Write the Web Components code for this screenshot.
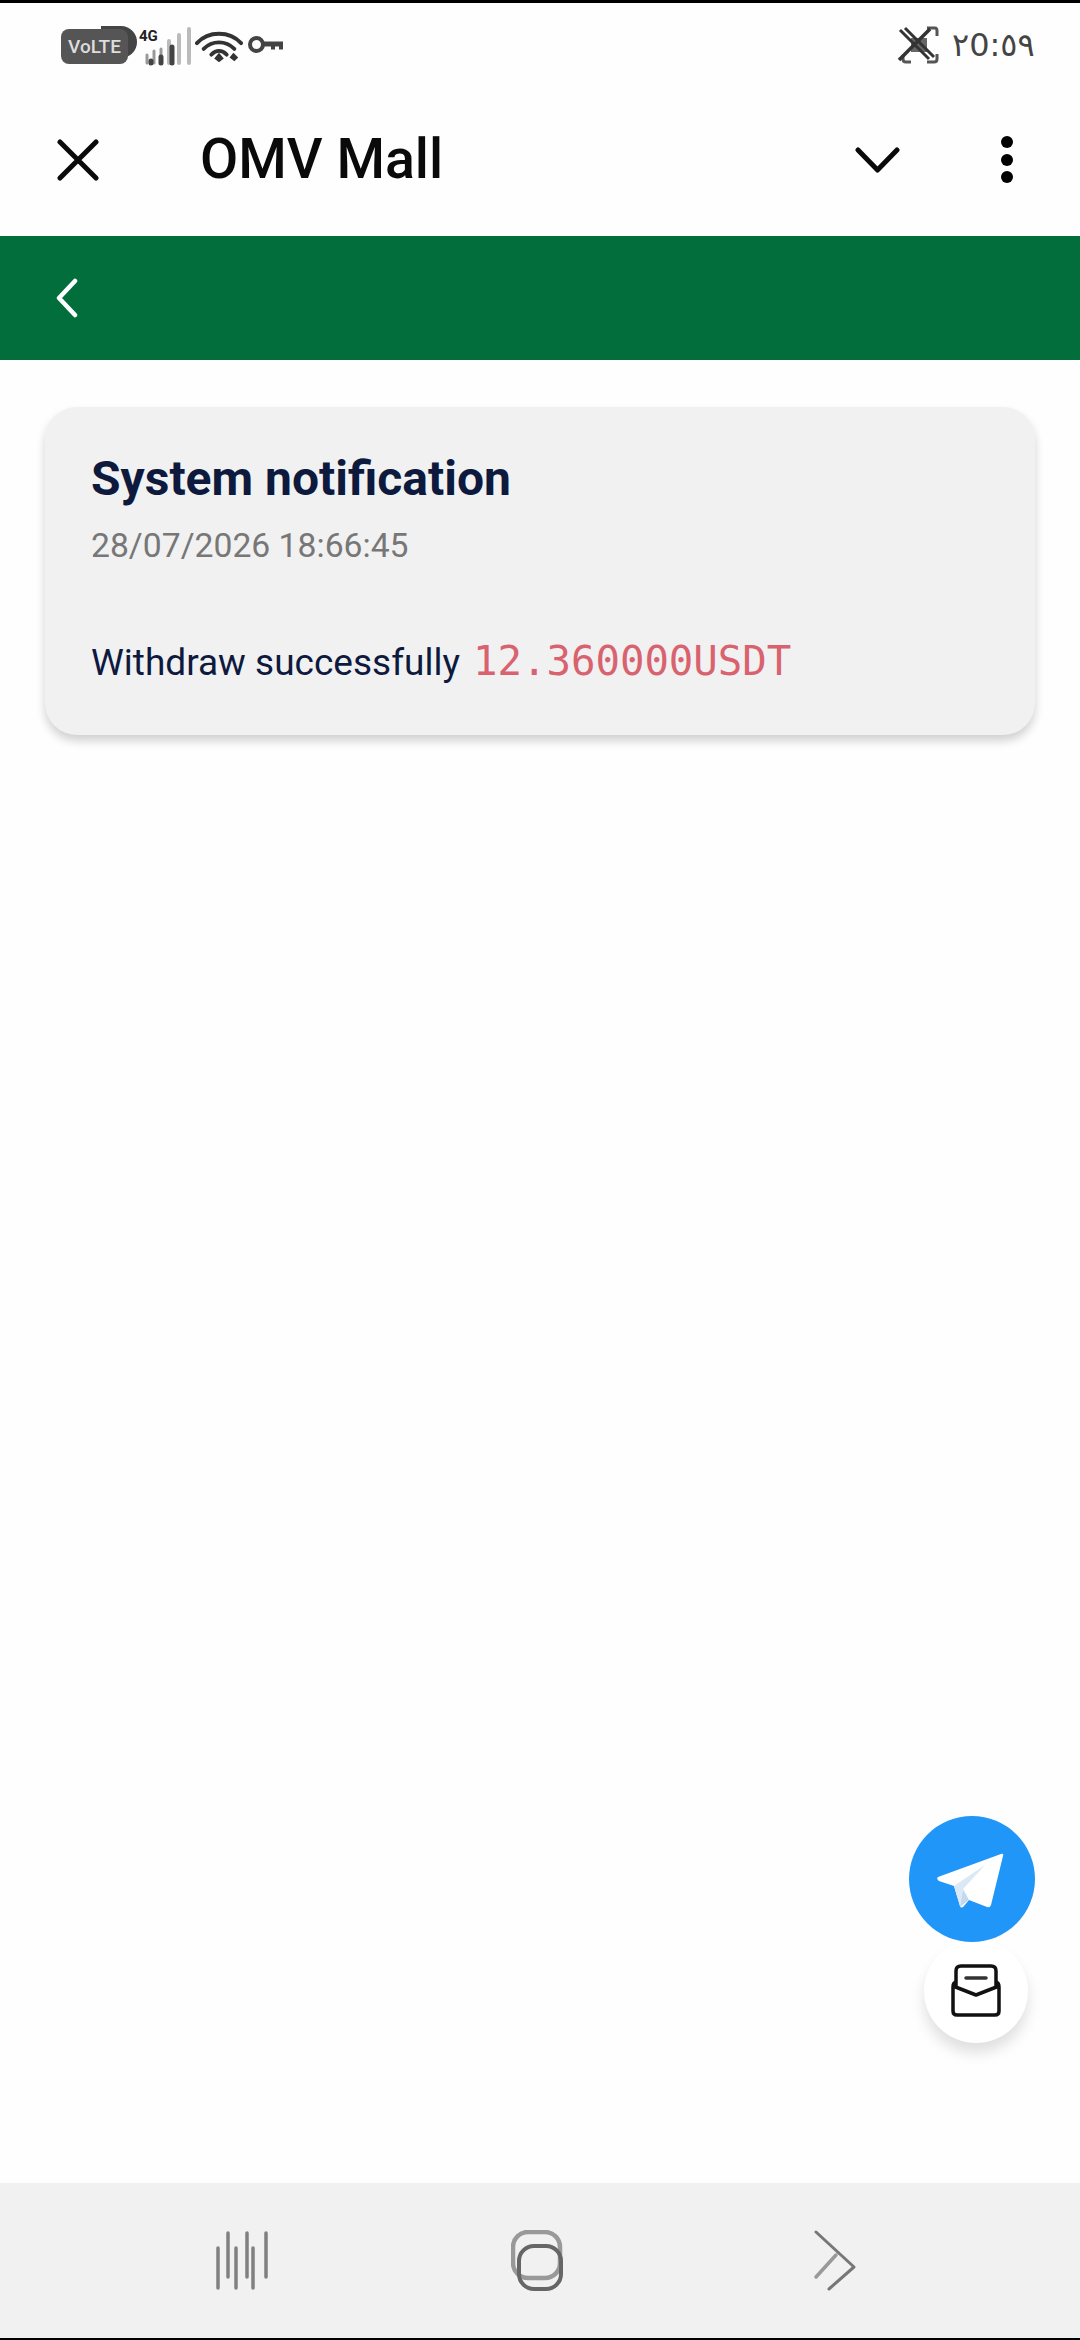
<!DOCTYPE html>
<html>
<head>
<meta charset="utf-8">
<style>
  html, body { margin: 0; padding: 0; }
  body { width: 1080px; height: 2340px; font-family: Roboto, "Liberation Sans", sans-serif; background: #fefefe; overflow: hidden; }
  main-page { height: 2340px; }
</style>
</head>
<body>
<main-page>
  <status-bar></status-bar>
  <app-bar>OMV Mall</app-bar>
  <green-bar></green-bar>
  <notice-list>
    <notice-card>
      <span slot="title">System notification</span>
      <span slot="date">28/07/2026 18:66:45</span>
      <span slot="text">Withdraw successfully</span>
      <span slot="amount">12.360000USDT</span>
    </notice-card>
    <float-buttons></float-buttons>
  </notice-list>
  <nav-bar></nav-bar>
</main-page>

<script>
class MainPage extends HTMLElement {
  connectedCallback() {
    this.attachShadow({ mode: "open" }).innerHTML = `
      <style>
        :host { display: flex; flex-direction: column; background: #fefefe; }
      </style>
      <slot></slot>`;
  }
}

class StatusBar extends HTMLElement {
  connectedCallback() {
    this.attachShadow({ mode: "open" }).innerHTML = `
      <style>
        :host { display: flex; align-items: center; justify-content: space-between; height: 57px; border-top: 3px solid #000; background: #fefefe; padding: 0 52px 0 61px; box-sizing: content-box; }
        .left, .right { display: flex; align-items: center; position: relative; }
        .left { isolation: isolate; }
        .pill { position: relative; width: 67px; height: 35px; margin-top: 30px; border-radius: 8px; background: #555; color: #ddd; font: 500 19px/35px Roboto, sans-serif; text-align: center; }
        .pill::after { content: ""; position: absolute; left: 40px; top: -3px; width: 36px; height: 32px; border-radius: 0 16px 16px 0; background: #444; z-index: -1; }
        .g { position: absolute; left: 78px; top: 31px; font: 700 15px/16px Roboto, sans-serif; color: #222; }
        svg { display: block; flex: none; }
        .time { font: 400 32px/36px "DejaVu Sans", sans-serif; color: #444; margin-left: 13px; width: 76px; white-space: nowrap; }
      </style>
      <div class="left">
        <div class="pill">VoLTE</div>
        <span class="g">4G</span>
        <svg width="50" height="40" viewBox="0 0 50 40" style="margin:30px 0 0 17px">
          <g stroke-linecap="round" fill="none">
            <path d="M2 28v8M9 24v12M16 22v14" stroke="#999" stroke-width="3"/>
            <path d="M24 14v22M34 8v28M44 2v34" stroke="#bbb" stroke-width="4"/>
            <path d="M6 34v2M16 30v6M27 20v16" stroke="#444" stroke-width="5"/>
          </g>
        </svg>
        <svg width="48" height="34" viewBox="0 0 50 34" style="margin:28px 0 0 0">
          <g fill="none" stroke="#333" stroke-width="4" stroke-linecap="round">
            <path d="M2 14C14 1 36 1 48 14"/>
            <path d="M9 20C18 11 32 11 41 20"/>
            <path d="M17 26C22 21 28 21 33 26"/>
          </g>
          <path d="M25 24l5 6-5 4-5-4zM40 24l5 5-4 4-5-4z" fill="#333"/>
        </svg>
        <svg width="37" height="19" viewBox="0 0 37 19" style="margin:26px 0 0 4px">
          <circle cx="9.500" cy="9.500" r="6.500" fill="none" stroke="#444" stroke-width="4"/>
          <path d="M16 6.500h20v8h-4v-3h-4v3h-4v-3h-8z" fill="#444"/>
        </svg>
      </div>
      <div class="right">
        <svg width="42" height="38" viewBox="0 0 42 38" style="margin-top:26px">
          <rect x="14" y="12" width="16" height="14" fill="#666"/>
          <path d="M6 29v4q0 3 3 3h5M30 2h8q2 0 2 3v5M30 36h7q3 0 3-3v-5" fill="none" stroke="#555" stroke-width="3"/>
          <path d="M3 4L32 33M8 2L37 31" stroke="#333" stroke-width="3" fill="none"/>
          <path d="M33 3L2 34" stroke="#333" stroke-width="3.500" fill="none"/>
        </svg>
        <div class="time" style="margin-top:26px">٢0:٥٩</div>
      </div>`;
  }
}

class AppBar extends HTMLElement {
  connectedCallback() {
    this.attachShadow({ mode: "open" }).innerHTML = `
      <style>
        :host { display: flex; align-items: center; height: 176px; background: #fefefe; padding: 24px 66px 0 57px; box-sizing: border-box; color: #0a0a0a; }
        svg { display: block; flex: none; }
        .title { flex: 1; margin-left: 101px; font: 500 55.500px/60px Roboto, sans-serif; }
        .more { margin-left: 100px; }
      </style>
      <svg width="42" height="42" viewBox="0 0 42 42">
        <path d="M3 3L39 39M39 3L3 39" stroke="#0a0a0a" stroke-width="5" stroke-linecap="round"/>
      </svg>
      <div class="title"><slot></slot></div>
      <svg width="45" height="28" viewBox="0 0 45 28">
        <path d="M3 4L22.500 24L42 4" fill="none" stroke="#0a0a0a" stroke-width="5" stroke-linecap="round" stroke-linejoin="round"/>
      </svg>
      <svg class="more" width="14" height="50" viewBox="0 0 14 50">
        <circle cx="7" cy="7" r="6"/><circle cx="7" cy="25" r="6"/><circle cx="7" cy="42" r="6"/>
      </svg>`;
  }
}

class GreenBar extends HTMLElement {
  connectedCallback() {
    this.attachShadow({ mode: "open" }).innerHTML = `
      <style>
        :host { display: flex; align-items: center; height: 124px; background: #016e3b; padding-left: 55px; box-sizing: border-box; }
        svg { display: block; }
      </style>
      <svg width="24" height="40" viewBox="0 0 24 40">
        <path d="M20 3L4 20L20 37" fill="none" stroke="#fff" stroke-width="4.500" stroke-linecap="round" stroke-linejoin="round"/>
      </svg>`;
  }
}

class NoticeList extends HTMLElement {
  connectedCallback() {
    this.attachShadow({ mode: "open" }).innerHTML = `
      <style>
        :host { display: block; flex: 1; position: relative; padding: 47px 45px 0 45px; background: #fefefe; }
      </style>
      <slot></slot>`;
  }
}

class NoticeCard extends HTMLElement {
  connectedCallback() {
    this.attachShadow({ mode: "open" }).innerHTML = `
      <style>
        :host { display: block; box-sizing: border-box; height: 328px; padding: 45px 46px 0 46px; background: #f1f1f2; border-radius: 32px; box-shadow: 0 6px 10px rgba(0,0,0,.18); }
        .title { font: 700 48px/54px Roboto, sans-serif; color: #0e1a3d; }
        .date { margin-top: 21px; font: 400 33.700px/38px Roboto, sans-serif; color: #777; }
        .line { display: flex; align-items: baseline; margin-top: 74px; }
        .text { font: 400 37px/44px Roboto, sans-serif; color: #0e1a3d; }
        .amount { margin-left: 13px; font: 400 40.700px/44px "DejaVu Sans Mono", monospace; color: #d9626f; }
      </style>
      <div class="title"><slot name="title"></slot></div>
      <div class="date"><slot name="date"></slot></div>
      <div class="line">
        <span class="text"><slot name="text"></slot></span>
        <span class="amount"><slot name="amount"></slot></span>
      </div>`;
  }
}

class FloatButtons extends HTMLElement {
  connectedCallback() {
    this.attachShadow({ mode: "open" }).innerHTML = `
      <style>
        :host { position: absolute; right: 45px; bottom: 140px; width: 126px; display: flex; flex-direction: column; align-items: center; gap: 0; }
        .tg { width: 126px; height: 126px; margin-bottom: -3px; border-radius: 50%; background: #2196f9; display: flex; align-items: center; justify-content: center; position: relative; z-index: 1; }
        .mail { width: 104px; height: 104px; margin-left: 8px; border-radius: 50%; background: #fff; box-shadow: 0 10px 14px rgba(0,0,0,.12); display: flex; align-items: center; justify-content: center; }
        svg { display: block; }
      </style>
      <div class="tg">
        <svg width="68" height="56" viewBox="0 0 68 56" style="margin:3px 0 0 -3px">
          <path d="M1 24Q-1 26 2 28L17 33L23 53Q24 56 27 53L32 47L50 54Q53 55 54 52L66 3Q67 0 64 1Z" fill="#fff"/>
          <path d="M17 33L48 12L26 36L23 53Z" fill="#dbe8f5"/>
          <path d="M26 36L32 47L23 54Z" fill="#c5d9ee"/>
        </svg>
      </div>
      <div class="mail">
        <svg width="50" height="54" viewBox="0 0 50 54">
          <path d="M5 22V7Q5 2 10 2H40Q45 2 45 7V22" fill="none" stroke="#111" stroke-width="3.500"/>
          <path d="M5 18Q2 19 2 23V47Q2 51 6 51H44Q48 51 48 47V23Q48 19 45 18M2 22L25 31L48 22" fill="none" stroke="#111" stroke-width="3.500" stroke-linejoin="round"/>
          <path d="M15 14H35" stroke="#333" stroke-width="3.500" stroke-linecap="round"/>
        </svg>
      </div>`;
  }
}

class NavBar extends HTMLElement {
  connectedCallback() {
    this.attachShadow({ mode: "open" }).innerHTML = `
      <style>
        :host { display: flex; justify-content: space-between; align-items: center; box-sizing: content-box; height: 155px; border-bottom: 2px solid #000; background: #f1f1f2; padding: 0 223px 0 214px; }
        svg { display: block; flex: none; }
        .home { margin-right: 9px; }
      </style>
      <svg width="56" height="60" viewBox="0 0 56 60">
        <g stroke="#808080" stroke-width="3.500" stroke-linecap="round" fill="none">
          <path d="M4 17V57M14 2V46M22 17V57M33 2V46M39 17V57M52 2V46"/>
        </g>
      </svg>
      <svg class="home" width="52" height="62" viewBox="0 0 52 62">
        <rect x="2" y="2" width="47" height="46" rx="15" fill="none" stroke="#999" stroke-width="4.500"/>
        <rect x="8" y="16" width="42" height="43" rx="15" fill="none" stroke="#666" stroke-width="4"/>
      </svg>
      <svg width="44" height="62" viewBox="0 0 44 62">
        <path d="M23 25L3 47" stroke="#999" stroke-width="3.500" stroke-linecap="round"/>
        <path d="M3 2L41 37L16 59" fill="none" stroke="#777" stroke-width="3" stroke-linecap="round" stroke-linejoin="round"/>
      </svg>`;
  }
}

customElements.define("main-page", MainPage);
customElements.define("status-bar", StatusBar);
customElements.define("app-bar", AppBar);
customElements.define("green-bar", GreenBar);
customElements.define("notice-list", NoticeList);
customElements.define("notice-card", NoticeCard);
customElements.define("float-buttons", FloatButtons);
customElements.define("nav-bar", NavBar);
</script>
</body>
</html>
